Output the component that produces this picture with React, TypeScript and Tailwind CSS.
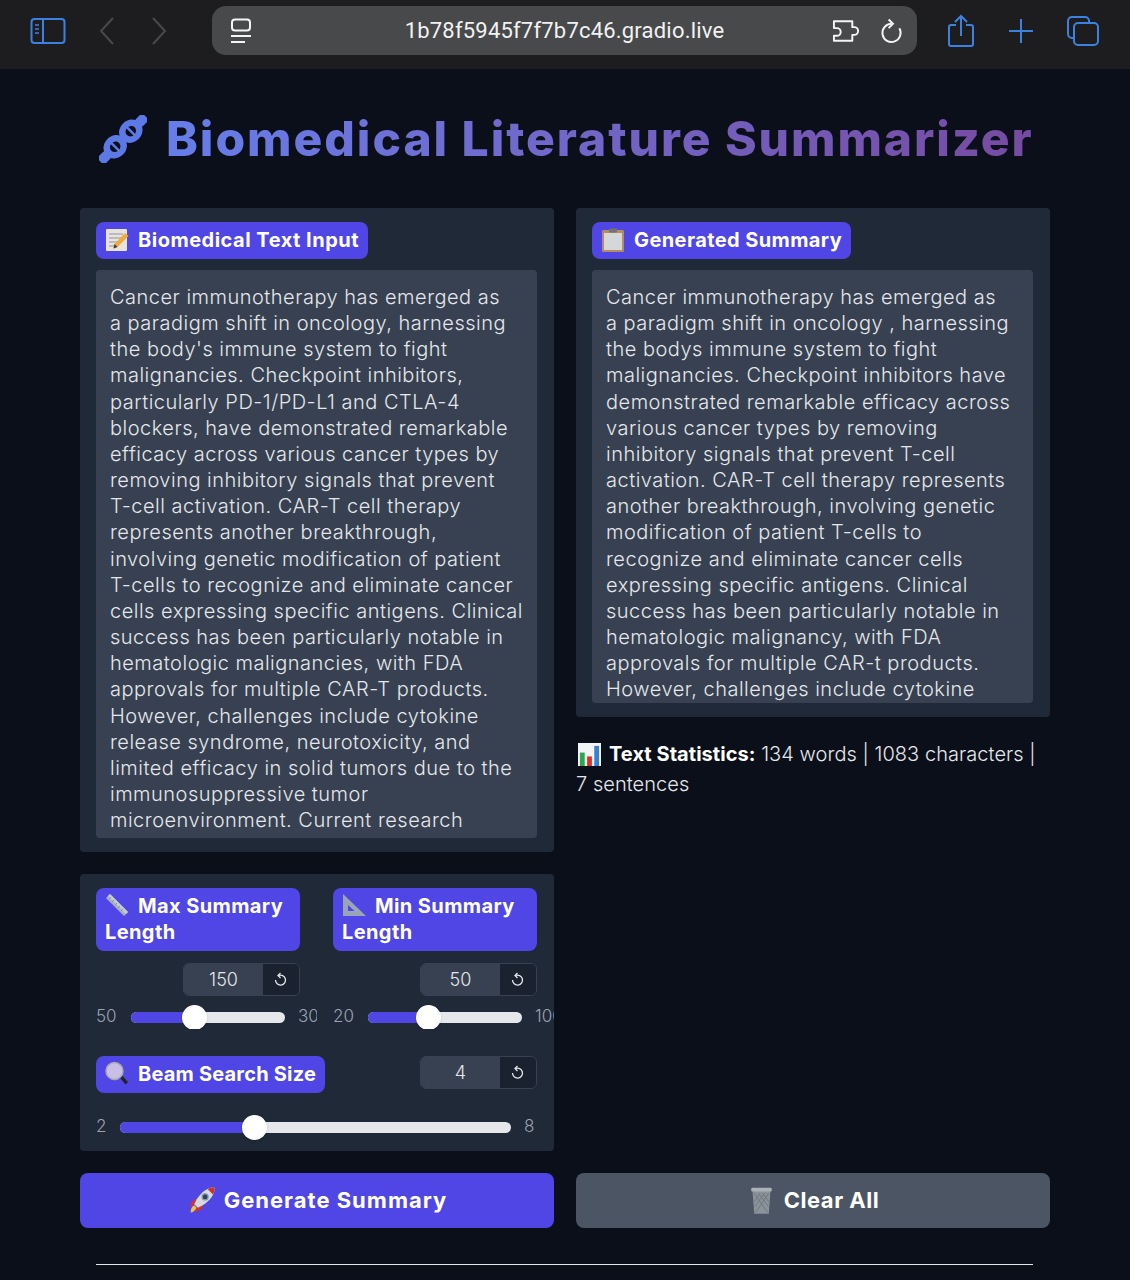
import React from "react";

const inputLines = [
  "Cancer immunotherapy has emerged as",
  "a paradigm shift in oncology, harnessing",
  "the body's immune system to fight",
  "malignancies. Checkpoint inhibitors,",
  "particularly PD-1/PD-L1 and CTLA-4",
  "blockers, have demonstrated remarkable",
  "efficacy across various cancer types by",
  "removing inhibitory signals that prevent",
  "T-cell activation. CAR-T cell therapy",
  "represents another breakthrough,",
  "involving genetic modification of patient",
  "T-cells to recognize and eliminate cancer",
  "cells expressing specific antigens. Clinical",
  "success has been particularly notable in",
  "hematologic malignancies, with FDA",
  "approvals for multiple CAR-T products.",
  "However, challenges include cytokine",
  "release syndrome, neurotoxicity, and",
  "limited efficacy in solid tumors due to the",
  "immunosuppressive tumor",
  "microenvironment. Current research",
];

const summaryLines = [
  "Cancer immunotherapy has emerged as",
  "a paradigm shift in oncology , harnessing",
  "the bodys immune system to fight",
  "malignancies. Checkpoint inhibitors have",
  "demonstrated remarkable efficacy across",
  "various cancer types by removing",
  "inhibitory signals that prevent T-cell",
  "activation. CAR-T cell therapy represents",
  "another breakthrough, involving genetic",
  "modification of patient T-cells to",
  "recognize and eliminate cancer cells",
  "expressing specific antigens. Clinical",
  "success has been particularly notable in",
  "hematologic malignancy, with FDA",
  "approvals for multiple CAR-t products.",
  "However, challenges include cytokine",
];

function Memo() {
  return (
    <svg viewBox="0 0 24 24" className="w-[24px] h-[26px] shrink-0">
      <rect x="1" y="1" width="21" height="22" rx="1" fill="#e8e4dc" />
      <path d="M4 6h14M4 10h14M4 14h9M4 18h6" stroke="#8a93a8" strokeWidth="1.200" />
      <path d="M20 5l3.500 3-11 11-4 1.500 1-4.500z" fill="#f2a93b" />
      <path d="M8.500 20.500l1-4.500 3 3z" fill="#4a3a30" />
    </svg>
  );
}

function Clipboard() {
  return (
    <svg viewBox="0 0 24 24" className="w-[24px] h-[26px] shrink-0">
      <rect x="1" y="2" width="22" height="22" rx="1.500" fill="#b58d63" />
      <rect x="3" y="5" width="18" height="17" fill="#d5d8d8" />
      <rect x="8" y="0.500" width="8" height="4" rx="1" fill="#77736c" />
    </svg>
  );
}

function Ruler() {
  return (
    <svg viewBox="0 0 24 24" className="inline-block w-[24px] h-[24px] align-[-4px]">
      <path d="M1 5l4-4 18 18-4 4z" fill="#a9b1bd" />
      <path d="M5 1l18 18-2 2L3 3z" fill="#c6ccd4" />
      <path d="M4 6l2-2M7 9l2-2M10 12l2-2M13 15l2-2M16 18l2-2" stroke="#7f8894" strokeWidth="0.800" />
    </svg>
  );
}

function SetSquare() {
  return (
    <svg viewBox="0 0 24 24" className="inline-block w-[24px] h-[24px] align-[-4px]">
      <path fillRule="evenodd" d="M1 1l23 22H1zM6 12v6h6.500z" fill="#9aa6b8" />
    </svg>
  );
}

function Magnifier() {
  return (
    <svg viewBox="0 0 24 24" className="w-[24px] h-[25px] shrink-0">
      <path d="M14 15l2-2 7 7.500-2.500 2.500z" fill="#23201f" />
      <circle cx="9.500" cy="9.500" r="8.500" fill="#c9bfe6" stroke="#a5a8ad" strokeWidth="1.500" />
    </svg>
  );
}

function BarChart() {
  return (
    <svg viewBox="0 0 24 24" className="w-[23px] h-[25px] shrink-0">
      <rect x="0" y="0" width="24" height="24" fill="#f2f4f6" />
      <rect x="2" y="10" width="5" height="14" fill="#2aa84a" />
      <rect x="9.500" y="14" width="5" height="10" fill="#d9302c" />
      <rect x="17" y="3" width="5" height="21" fill="#3a7fd0" />
    </svg>
  );
}

function Rocket() {
  return (
    <svg viewBox="0 0 24 24" className="w-[29px] h-[29px] shrink-0">
      <path d="M3 22c0-3 1-5 3-6l2 2c-1 2-3 4-5 4z" fill="#f5c33b" />
      <path d="M5 12l4-2-3 6-4 1zM12 19l2-4-6 3-1 4z" fill="#d9302c" />
      <path d="M23 1c-6 0-11 4-15 10l-2 4 3 3 4-2c6-4 10-9 10-15z" fill="#d5d9e0" />
      <path d="M23 1c-2 0-4 .5-6 1.500L21.500 7C22.500 5 23 3 23 1z" fill="#c8342c" />
      <circle cx="15" cy="9" r="2.500" fill="#31415e" stroke="#8c96a6" strokeWidth="1" />
    </svg>
  );
}

function Trash() {
  return (
    <svg viewBox="0 0 24 24" className="w-[29px] h-[29px] shrink-0">
      <path d="M4.500 3h15L18 23H6z" fill="#8b939a" />
      <path d="M6 6l11 16M9.500 6l8 11M13 6l5 7M18 6L7 22M14.500 6l-8 11M11 6l-5 7" stroke="#6c747b" strokeWidth="0.700" />
      <rect x="3.500" y="1.500" width="17" height="3" rx="1" fill="#aab1b7" />
    </svg>
  );
}

function Dna() {
  return (
    <svg viewBox="0 0 48 48" className="w-[48px] h-[48px] shrink-0">
      <g transform="rotate(-45 24 24)">
        <path d="M-8 19h8l8 1v8l-8 1h-8zM56 19h-8l-8 1v8l8 1h8z" fill="#5d79e6" />
        <ellipse cx="13" cy="24" rx="12.500" ry="11" fill="#5d79e6" />
        <ellipse cx="35" cy="24" rx="12.500" ry="11" fill="#5d79e6" />
        <ellipse cx="13" cy="24" rx="5.500" ry="5" fill="#0b0f19" />
        <ellipse cx="35" cy="24" rx="5.500" ry="5" fill="#0b0f19" />
        <path d="M13 18v12M35 18v12" stroke="#5d79e6" strokeWidth="2.500" />
      </g>
    </svg>
  );
}

function ResetIcon() {
  return (
    <svg viewBox="0 0 16 16" className="w-[16px] h-[16px]" fill="none" stroke="#e5e7eb" strokeWidth="1.300">
      <path d="M5.500 3.500a5 5 0 1 1-3 4.500" />
      <path d="M7.500 1 5 3.500 7.500 6" />
    </svg>
  );
}

function Badge({ children, className = "" }: { children: React.ReactNode; className?: string }) {
  return (
    <div className={`bg-[#4f46e5] rounded-lg text-white font-bold text-[20px] leading-[26px] ${className}`}>
      {children}
    </div>
  );
}

function NumberBox({ value }: { value: string }) {
  return (
    <div className="w-[117px] h-[33px] flex rounded-md border border-[#374151] overflow-hidden">
      <div className="w-[79px] bg-[#374151] flex items-center justify-center text-[18px] font-light text-[#e5e7eb]">{value}</div>
      <div className="flex-1 bg-[#1a2230] flex items-center justify-center">
        <ResetIcon />
      </div>
    </div>
  );
}

function Slider({ min, max, trackW, fillW, gapL, gapR }: { min: string; max: string; trackW: string; fillW: number; gapL: string; gapR: string }) {
  return (
    <div className="flex items-center h-[24px] text-[17px] font-light text-[#9ca3af] whitespace-nowrap">
      <span className={`shrink-0 ${gapL}`}>{min}</span>
      <div className={`relative h-[11px] rounded-full bg-[#e5e7eb] shrink-0 ${trackW}`}>
        <div className="h-full rounded-l-full bg-[#4f46e5]" style={{ width: fillW }} />
        <div
          className="absolute top-[-7px] w-[25px] h-[25px] rounded-full bg-white shadow"
          style={{ left: fillW - 12 }}
        />
      </div>
      <span className={`shrink-0 ${gapR}`}>{max}</span>
    </div>
  );
}

export default function App() {
  return (
    <div className="h-[1280px] overflow-hidden bg-[#0b0f19] font-['Inter',sans-serif]">
      {/* Safari toolbar */}
      <div className="h-[69px] pb-[8px] bg-[#1d1d20] flex items-center">
        <svg viewBox="0 0 36 28" className="w-[36px] h-[28px] ml-[30px] shrink-0" fill="none" stroke="#3b82e0" strokeWidth="2">
          <rect x="1.500" y="2" width="33" height="24" rx="3" />
          <path d="M13 2v24" />
          <path d="M5 8h4M5 12h4M5 16h4" strokeWidth="1.300" />
        </svg>
        <svg viewBox="0 0 16 28" className="w-[16px] h-[28px] ml-[33px] shrink-0" fill="none" stroke="#48494c" strokeWidth="2">
          <path d="M14 1 2 14l12 13" />
        </svg>
        <svg viewBox="0 0 16 28" className="w-[16px] h-[28px] ml-[36px] shrink-0" fill="none" stroke="#48494c" strokeWidth="2">
          <path d="M2 1l12 13L2 27" />
        </svg>
        <div className="ml-[45px] w-[705px] h-[49px] rounded-[14px] bg-[#48494b] flex items-center shrink-0">
          <svg viewBox="0 0 22 26" className="w-[22px] h-[26px] ml-[18px]" fill="none" stroke="#f5f5f5" strokeWidth="2">
            <rect x="2" y="1.500" width="18" height="11" rx="3" />
            <path d="M1 18h20M1 24h14" />
          </svg>
          <div className="flex-1 pl-[45px] text-center text-[#f2f2f2] text-[22px] tracking-[0.2px] font-['Roboto',sans-serif]">
            1b78f5945f7f7b7c46.gradio.live
          </div>
          <svg viewBox="0 0 30 24" className="w-[29px] h-[24px] shrink-0" fill="none" stroke="#f5f5f5" strokeWidth="2">
            <path d="M2 2h19v6h2a4 4 0 0 1 0 8h-2v6H2v-5h3a4 4 0 0 0 0-8H2z" strokeLinejoin="round" />
          </svg>
          <svg viewBox="0 0 24 26" className="w-[23px] h-[26px] ml-[19px] mr-[14px] shrink-0" fill="none" stroke="#f5f5f5" strokeWidth="2">
            <path d="M12 5.500a9.500 9.500 0 1 0 8.200 4.700" />
            <path d="M9 1l4.500 4.500L9 10" />
          </svg>
        </div>
        <svg viewBox="0 0 28 34" className="w-[28px] h-[34px] ml-[30px] shrink-0" fill="none" stroke="#3b82e0" strokeWidth="2">
          <path d="M9 11H4a2 2 0 0 0-2 2v17a2 2 0 0 0 2 2h20a2 2 0 0 0 2-2V13a2 2 0 0 0-2-2h-5" />
          <path d="M14 22V2M8 8l6-6 6 6" />
        </svg>
        <svg viewBox="0 0 26 26" className="w-[26px] h-[26px] ml-[33px] shrink-0" fill="none" stroke="#3b82e0" strokeWidth="2">
          <path d="M13 1v24M1 13h24" />
        </svg>
        <svg viewBox="0 0 32 30" className="w-[32px] h-[30px] ml-[33px] shrink-0" fill="none" stroke="#3b82e0" strokeWidth="2">
          <path d="M6 22H5a4 4 0 0 1-4-4V5a4 4 0 0 1 4-4h13a4 4 0 0 1 4 4v2" />
          <rect x="7" y="7" width="24" height="22" rx="4" />
        </svg>
      </div>

      <main className="px-[80px]">
        {/* Title */}
        <div className="h-[139px] flex items-center pl-[19px] gap-[19px]">
          <Dna />
          <h1 className="text-[48px] font-extrabold leading-none tracking-[1.950px] whitespace-nowrap text-transparent bg-clip-text bg-gradient-to-r from-[#667eea] to-[#764ba2]">
            Biomedical Literature Summarizer
          </h1>
        </div>

        <div className="grid grid-cols-[474px_474px] gap-x-[22px]">
          {/* Left column */}
          <div className="flex flex-col gap-[22px]">
            <section className="bg-[#1f2937] rounded-[4px] px-[16px] pt-[14px] pb-[14px]">
              <Badge className="w-fit h-[37px] pl-[9px] pr-[9px] pb-[2px] flex items-center gap-[9px] whitespace-nowrap tracking-[0.500px]">
                <Memo />
                Biomedical Text Input
              </Badge>
              <div className="mt-[11px] w-[441px] h-[568px] bg-[#374151] rounded-[4px] pl-[14px] pt-[14px] overflow-hidden text-[20px] font-[350] leading-[26.150px] text-[#e5e7eb] tracking-[0.500px] whitespace-nowrap">
                {inputLines.map((line) => (
                  <div key={line}>{line}</div>
                ))}
              </div>
            </section>

            <section className="bg-[#1f2937] rounded-[4px] h-[277px] px-[16px] pt-[14px] overflow-hidden">
              <div className="grid grid-cols-[204px_204px] gap-x-[33px]">
                <div>
                  <Badge className="h-[63px] pl-[9px] pt-[5px] tracking-[0.400px]">
                    <Ruler />
                    <span className="ml-[9px]">Max Summary</span>
                    <br />
                    Length
                  </Badge>
                  <div className="flex justify-end mt-[12px]">
                    <NumberBox value="150" />
                  </div>
                  <div className="w-[221px] overflow-hidden mt-[9px]">
                    <Slider min="50" max="300" trackW="w-[154px]" fillW={63} gapL="w-[35px]" gapR="ml-[13px]" />
                  </div>
                </div>
                <div>
                  <Badge className="h-[63px] pl-[9px] pt-[5px] tracking-[0.400px]">
                    <SetSquare />
                    <span className="ml-[9px]">Min Summary</span>
                    <br />
                    Length
                  </Badge>
                  <div className="flex justify-end mt-[12px]">
                    <NumberBox value="50" />
                  </div>
                  <div className="w-[221px] overflow-hidden mt-[9px]">
                    <Slider min="20" max="100" trackW="w-[154px]" fillW={60} gapL="w-[35px]" gapR="ml-[13px]" />
                  </div>
                </div>
              </div>
              <div className="flex justify-between items-start mt-[27px] w-[441px]">
                <Badge className="h-[37px] pl-[9px] pr-[9px] pb-[2px] flex items-center gap-[9px] whitespace-nowrap tracking-[0.200px]">
                  <Magnifier />
                  Beam Search Size
                </Badge>
                <NumberBox value="4" />
              </div>
              <div className="mt-[22px]">
                <Slider min="2" max="8" trackW="w-[391px]" fillW={134} gapL="w-[24px]" gapR="ml-[13px]" />
              </div>
            </section>
          </div>

          {/* Right column */}
          <div>
            <section className="bg-[#1f2937] rounded-[4px] px-[16px] pt-[14px] pb-[14px]">
              <Badge className="w-fit h-[37px] pl-[9px] pr-[9px] pb-[2px] flex items-center gap-[9px] whitespace-nowrap tracking-[0.400px]">
                <Clipboard />
                Generated Summary
              </Badge>
              <div className="mt-[11px] w-[441px] h-[433px] bg-[#374151] rounded-[4px] pl-[14px] pt-[14px] overflow-hidden text-[20px] font-[350] leading-[26.150px] text-[#e5e7eb] tracking-[0.500px] whitespace-nowrap">
                {summaryLines.map((line) => (
                  <div key={line}>{line}</div>
                ))}
              </div>
            </section>
            <div className="mt-[22px] text-[20px] font-[350] leading-[30px] text-[#e5e7eb] tracking-[0.050px]">
              <div className="flex items-center gap-[8px] pl-[2px] whitespace-nowrap">
                <BarChart />
                <span>
                  <b className="text-white font-bold">Text Statistics:</b> 134 words | 1083 characters |
                </span>
              </div>
              <div>7 sentences</div>
            </div>
          </div>
        </div>

        {/* Actions */}
        <div className="grid grid-cols-[474px_474px] gap-x-[22px] mt-[22px]">
          <button className="h-[55px] rounded-lg bg-[#4f46e5] text-white text-[22px] tracking-[1px] font-bold flex items-center justify-center gap-[8px]">
            <Rocket />
            Generate Summary
          </button>
          <button className="h-[55px] rounded-lg bg-[#4b5563] text-white text-[22px] tracking-[0.500px] font-bold flex items-center justify-center gap-[8px]">
            <Trash />
            Clear All
          </button>
        </div>

        <hr className="mt-[36px] ml-[16px] w-[937px] border-t border-[#e5e7eb]" />
      </main>
    </div>
  );
}
